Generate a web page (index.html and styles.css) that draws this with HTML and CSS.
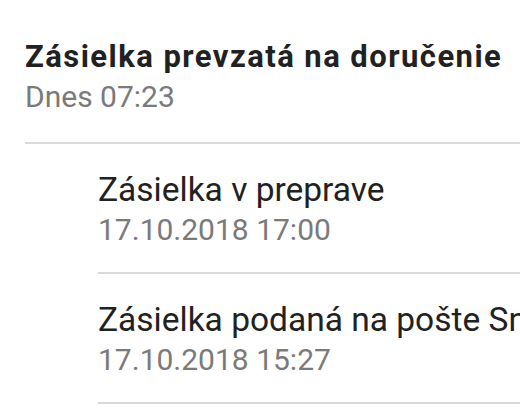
FILE: index.html
```html
<!DOCTYPE html>
<html lang="sk">
<head>
  <meta charset="UTF-8" />
  <meta name="viewport" content="width=device-width, initial-scale=1.0"/>
  <title>Sledovanie zásielky</title>
  <link rel="stylesheet" href="styles.css">
</head>
<body>
  <div class="timeline">
    <div class="event current">
      <div class="event-title">Zásielka prevzatá na doručenie</div>
      <div class="event-time">Dnes 07:23</div>
    </div>
    <div class="event">
      <div class="event-title">Zásielka v preprave</div>
      <div class="event-time">17.10.2018 17:00</div>
    </div>
    <div class="event">
      <div class="event-title">Zásielka podaná na pošte Sniná</div>
      <div class="event-time">17.10.2018 15:27</div>
    </div>
  </div>
</body>
</html>
```

FILE: styles.css
```css
* { box-sizing: border-box; }

body {
  margin: 0;
  font-family: Roboto, 'Noto Sans', sans-serif;
  background: #fff;
  color: #212121;
  overflow: hidden;
}

.timeline {
  display: flex;
  flex-direction: column;
  padding-top: 37px;
}

.event {
  margin-left: 98px;
  padding: 25px 0 22px;
  border-bottom: 2px solid #d9d9d9;
  white-space: nowrap;
  overflow: hidden;
}

.event.current {
  margin-left: 25px;
  padding: 0 0 25px;
}

.event-title {
  font-size: 33.5px;
  line-height: 41px;
}

.current .event-title {
  font-size: 31px;
  line-height: 40px;
  font-weight: 700;
  letter-spacing: 1.45px;
}

.event-time {
  font-size: 30px;
  line-height: 40px;
  color: #7a7a7a;
}
```
